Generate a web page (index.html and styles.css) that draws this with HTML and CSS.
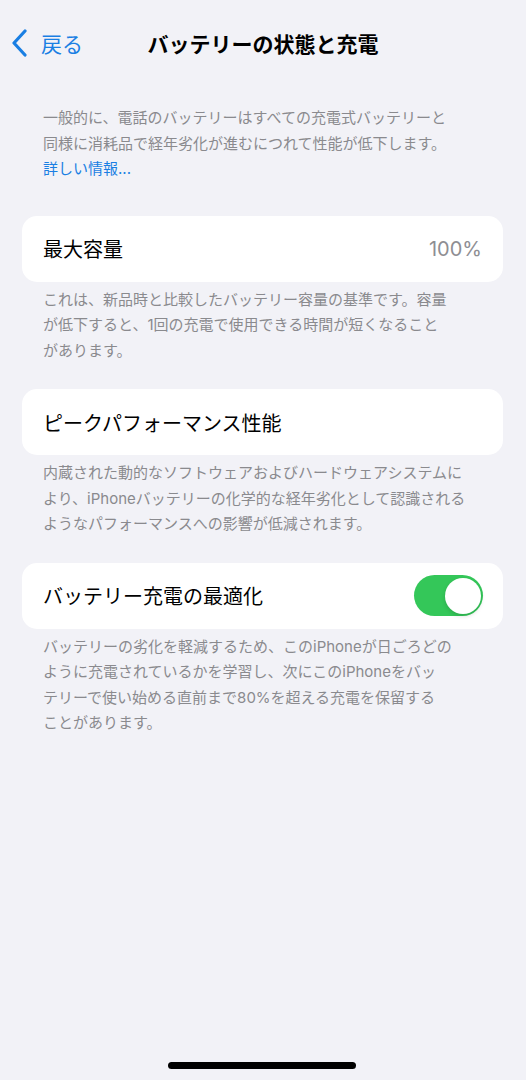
FILE: index.html
```html
<!DOCTYPE html>
<html lang="ja">
<head>
    <meta charset="UTF-8">
    <meta name="viewport" content="width=device-width, initial-scale=1.0">
    <title>バッテリーの状態と充電</title>
    <link rel="stylesheet" href="styles.css">
</head>
<body>
    <header class="nav">
        <a href="#" class="back">
            <svg class="chevron" width="18" height="28" viewBox="0 0 18 28">
                <path d="M14 2 L3 14 L14 26" fill="none" stroke="currentColor" stroke-width="3.2" stroke-linecap="round" stroke-linejoin="round"/>
            </svg>
            <span>戻る</span>
        </a>
        <h1 class="title">バッテリーの状態と充電</h1>
        <span></span>
    </header>

    <p class="intro">
        一般的に、電話のバッテリーはすべての充電式バッテリーと<br>
        同様に消耗品で経年劣化が進むにつれて性能が低下します。<br>
        <a href="#" class="more">詳しい情報...</a>
    </p>

    <section class="group">
        <div class="card">
            <span class="label">最大容量</span>
            <span class="value">100%</span>
        </div>
        <p class="footnote">
            これは、新品時と比較したバッテリー容量の基準です。容量<br>
            が低下すると、1回の充電で使用できる時間が短くなること<br>
            があります。
        </p>
    </section>

    <section class="group">
        <div class="card">
            <span class="label">ピークパフォーマンス性能</span>
        </div>
        <p class="footnote">
            内蔵された動的なソフトウェアおよびハードウェアシステムに<br>
            より、iPhoneバッテリーの化学的な経年劣化として認識される<br>
            ようなパフォーマンスへの影響が低減されます。
        </p>
    </section>

    <section class="group">
        <div class="card">
            <span class="label">バッテリー充電の最適化</span>
            <label class="switch">
                <input type="checkbox" checked>
                <span class="knob"></span>
            </label>
        </div>
        <p class="footnote">
            バッテリーの劣化を軽減するため、このiPhoneが日ごろどの<br>
            ように充電されているかを学習し、次にこのiPhoneをバッ<br>
            テリーで使い始める直前まで80%を超える充電を保留する<br>
            ことがあります。
        </p>
    </section>

    <div class="home-bar"></div>
</body>
</html>
```

FILE: styles.css
```css
* { box-sizing: border-box; }
body { margin: 0; min-height: 1080px; background: #f2f2f7; font-family: "Inter", "Noto Sans CJK JP", sans-serif; color: #000; }
a { text-decoration: none; }

.nav { height: 85px; display: grid; grid-template-columns: 1fr auto 1fr; align-items: center; }
.back { display: flex; align-items: center; gap: 12px; padding-left: 11px; color: #1a7fe3; font-size: 21px; }
.chevron { display: block; }
.title { margin: 0; font-size: 21px; font-weight: 700; letter-spacing: 0; }

.intro { margin: 20px 0 0; padding: 0 20px 0 43px; font-size: 15px; line-height: 25.5px; color: #8a8a8e; }
.more { color: #1a7fe3; }

.group { margin-top: 34px; }
.group + .group { margin-top: 26px; }
.card { margin: 0 23px 0 22px; height: 66px; padding: 0 21px; background: #fff; border-radius: 15px; display: flex; align-items: center; justify-content: space-between; }
.label { font-size: 20px; }
.value { font-size: 20px; color: #8e8e93; }

.footnote { margin: 5px 0 0; padding: 0 20px 0 43px; font-size: 15px; line-height: 25.5px; color: #8a8a8e; }

.switch { position: relative; display: block; width: 69px; height: 41px; margin-right: -1px; }
.switch input { display: none; }
.switch .knob { position: absolute; inset: 0; background: #34c759; border-radius: 21px; }
.switch .knob::after { content: ""; position: absolute; top: 2.5px; right: 2.5px; width: 36px; height: 36px; border-radius: 50%; background: #fff; box-shadow: 0 2px 4px rgba(0,0,0,0.15); }

.home-bar { position: fixed; left: 168px; bottom: 11px; width: 188px; height: 7px; border-radius: 4px; background: #000; }
```
